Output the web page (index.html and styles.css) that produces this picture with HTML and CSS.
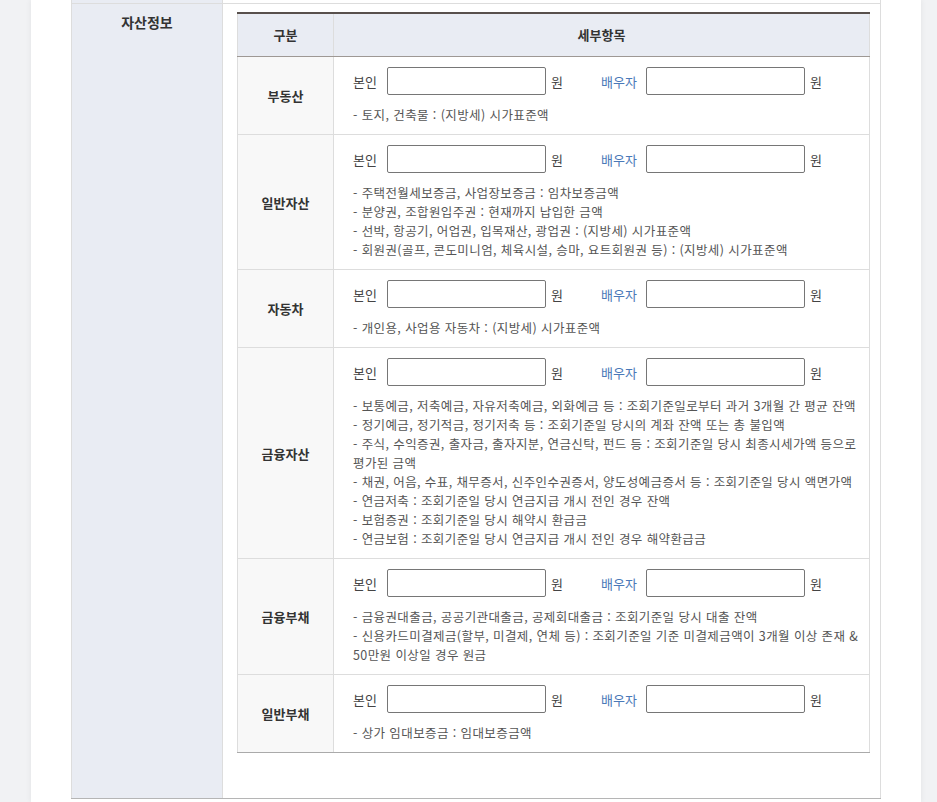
FILE: index.html
```html
<!DOCTYPE html>
<html lang="ko">
<head>
<meta charset="utf-8">
<title>자산정보</title>
<link rel="stylesheet" href="styles.css">
</head>
<body>
<div class="page">
  <table class="form">
    <colgroup><col class="c-head"><col class="c-body"></colgroup>
    <tr class="prev"><th></th><td></td></tr>
    <tr>
      <th class="sec">자산정보</th>
      <td class="sec-body">
        <table class="assets">
          <colgroup><col class="a-head"><col class="a-body"></colgroup>
          <thead>
            <tr><th>구분</th><th>세부항목</th></tr>
          </thead>
          <tbody>
            <tr>
              <th>부동산</th>
              <td>
                <div class="amounts">
                  <span class="lbl">본인</span><input class="amt" type="text"><span class="won">원</span>
                  <span class="lbl sp">배우자</span><input class="amt" type="text"><span class="won">원</span>
                </div>
                <ul class="desc">
                  <li>- 토지, 건축물 : (지방세) 시가표준액</li>
                </ul>
              </td>
            </tr>
            <tr>
              <th>일반자산</th>
              <td>
                <div class="amounts">
                  <span class="lbl">본인</span><input class="amt" type="text"><span class="won">원</span>
                  <span class="lbl sp">배우자</span><input class="amt" type="text"><span class="won">원</span>
                </div>
                <ul class="desc">
                  <li>- 주택전월세보증금, 사업장보증금 : 임차보증금액</li>
                  <li>- 분양권, 조합원입주권 : 현재까지 납입한 금액</li>
                  <li>- 선박, 항공기, 어업권, 입목재산, 광업권 : (지방세) 시가표준액</li>
                  <li>- 회원권(골프, 콘도미니엄, 체육시설, 승마, 요트회원권 등) : (지방세) 시가표준액</li>
                </ul>
              </td>
            </tr>
            <tr>
              <th>자동차</th>
              <td>
                <div class="amounts">
                  <span class="lbl">본인</span><input class="amt" type="text"><span class="won">원</span>
                  <span class="lbl sp">배우자</span><input class="amt" type="text"><span class="won">원</span>
                </div>
                <ul class="desc">
                  <li>- 개인용, 사업용 자동차 : (지방세) 시가표준액</li>
                </ul>
              </td>
            </tr>
            <tr>
              <th>금융자산</th>
              <td>
                <div class="amounts">
                  <span class="lbl">본인</span><input class="amt" type="text"><span class="won">원</span>
                  <span class="lbl sp">배우자</span><input class="amt" type="text"><span class="won">원</span>
                </div>
                <ul class="desc">
                  <li>- 보통예금, 저축예금, 자유저축예금, 외화예금 등 : 조회기준일로부터 과거 3개월 간 평균 잔액</li>
                  <li>- 정기예금, 정기적금, 정기저축 등 : 조회기준일 당시의 계좌 잔액 또는 총 불입액</li>
                  <li>- 주식, 수익증권, 출자금, 출자지분, 연금신탁, 펀드 등 : 조회기준일 당시 최종시세가액 등으로<br>평가된 금액</li>
                  <li>- 채권, 어음, 수표, 채무증서, 신주인수권증서, 양도성예금증서 등 : 조회기준일 당시 액면가액</li>
                  <li>- 연금저축 : 조회기준일 당시 연금지급 개시 전인 경우 잔액</li>
                  <li>- 보험증권 : 조회기준일 당시 해약시 환급금</li>
                  <li>- 연금보험 : 조회기준일 당시 연금지급 개시 전인 경우 해약환급금</li>
                </ul>
              </td>
            </tr>
            <tr>
              <th>금융부채</th>
              <td>
                <div class="amounts">
                  <span class="lbl">본인</span><input class="amt" type="text"><span class="won">원</span>
                  <span class="lbl sp">배우자</span><input class="amt" type="text"><span class="won">원</span>
                </div>
                <ul class="desc">
                  <li>- 금융권대출금, 공공기관대출금, 공제회대출금 : 조회기준일 당시 대출 잔액</li>
                  <li>- 신용카드미결제금(할부, 미결제, 연체 등) : 조회기준일 기준 미결제금액이 3개월 이상 존재 &amp;<br>50만원 이상일 경우 원금</li>
                </ul>
              </td>
            </tr>
            <tr>
              <th>일반부채</th>
              <td>
                <div class="amounts">
                  <span class="lbl">본인</span><input class="amt" type="text"><span class="won">원</span>
                  <span class="lbl sp">배우자</span><input class="amt" type="text"><span class="won">원</span>
                </div>
                <ul class="desc">
                  <li>- 상가 임대보증금 : 임대보증금액</li>
                </ul>
              </td>
            </tr>
          </tbody>
        </table>
      </td>
    </tr>
  </table>
</div>
</body>
</html>
```

FILE: styles.css
```css
* { box-sizing: border-box; }
html, body { margin: 0; padding: 0; }
body {
  background: #f1f2f4;
  font-family: "Noto Sans CJK KR", "Noto Sans", sans-serif;
  color: #333;
  height: 802px;
  overflow: hidden;
}
.page {
  margin-left: 31px;
  width: 890px;
  height: 802px;
  background: #fff;
  padding-left: 40px;
  box-shadow: 0 0 6px rgba(0, 0, 0, 0.07);
}
.form {
  border-collapse: collapse;
  table-layout: fixed;
  width: 809px;
  border-left: 1px solid #ddd;
  border-right: 1px solid #ddd;
  border-bottom: 1px solid #b5b5b5;
}
.c-head { width: 151px; }
.c-body { width: 658px; }
.form > tbody > tr > th,
.form > tbody > tr > td {
  border: 1px solid #ddd;
  padding: 0;
}
.form > tbody > tr:last-child > th,
.form > tbody > tr:last-child > td { border-bottom-color: #b5b5b5; }
.form .prev th, .form .prev td { height: 3px; border-top: 0; }
.form .prev th { background: #e9ecf3; }
.sec {
  background: #e9ecf3;
  vertical-align: top;
  font-size: 14px;
  font-weight: bold;
  line-height: 21px;
  padding-top: 8px !important;
  color: #333;
}
.form > tbody > tr > td.sec-body {
  padding: 8px 10px 45px 14px;
  vertical-align: top;
}
.assets {
  border-collapse: collapse;
  table-layout: fixed;
  width: 632px;
  border-top: 2px solid #58504c;
  border-bottom: 1px solid #aaa;
}
.a-head { width: 96px; }
.a-body { width: 536px; }
.assets th, .assets td {
  border: 1px solid #ddd;
  padding: 0;
}
.assets thead th {
  background: #e9ecf3;
  height: 44px;
  font-size: 13px;
  font-weight: bold;
  color: #333;
  border-top: 0;
  border-bottom: 1px solid #9e9894;
}
.assets tbody th {
  background: #f8f8f8;
  font-size: 13px;
  font-weight: bold;
  color: #333;
  vertical-align: middle;
}
.assets tbody tr:last-child th,
.assets tbody tr:last-child td { border-bottom: 1px solid #aaa; }
.assets tbody td {
  padding: 10px 0 10px 19px;
  vertical-align: top;
}
.amounts {
  display: flex;
  align-items: center;
  height: 28px;
  margin-bottom: 10px;
  font-size: 13px;
  color: #444;
}
.lbl { width: 34px; flex: none; }
.lbl.sp { width: 45px; color: #4a79b8; }
.won { width: 55px; padding-left: 5px; flex: none; }
.amt {
  width: 159px;
  height: 28px;
  flex: none;
  border: 1px solid #767676;
  border-radius: 2px;
  margin: 0;
  padding: 0 4px;
  font: inherit;
  background: #fff;
}
.desc {
  list-style: none;
  margin: 0;
  padding: 0;
  font-size: 12.5px;
  letter-spacing: 0.4px;
  line-height: 19px;
  color: #555;
  white-space: nowrap;
}
```
